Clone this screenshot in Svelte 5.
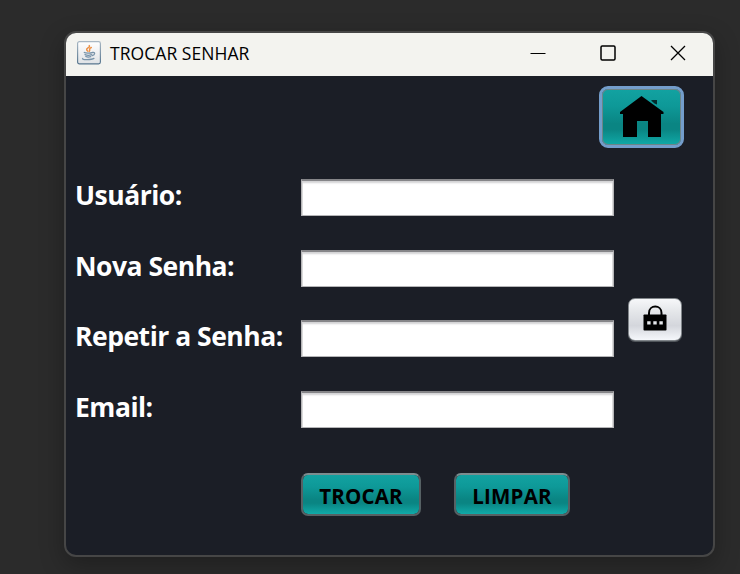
<script>
  const fields = [
    { id: 'usuario', label: 'Usuário:', secret: false },
    { id: 'nova', label: 'Nova Senha:', secret: true },
    { id: 'repetir', label: 'Repetir a Senha:', secret: true },
    { id: 'email', label: 'Email:', secret: false }
  ];
  let values = $state({ usuario: '', nova: '', repetir: '', email: '' });
  let visible = $state(false);

  function clear() {
    for (const f of fields) values[f.id] = '';
  }
</script>

<div class="desktop">
  <main class="window">
    <header class="titlebar">
      <svg class="java" width="24" height="24" viewBox="0 0 24 24">
        <defs>
          <linearGradient id="tile" x1="0" y1="0" x2="0" y2="1">
            <stop offset="0" stop-color="#fff" />
            <stop offset="1" stop-color="#dfe2e5" />
          </linearGradient>
          <linearGradient id="rim" x1="0" y1="0" x2="0" y2="1">
            <stop offset="0" stop-color="#a9b8c4" />
            <stop offset="1" stop-color="#57768f" />
          </linearGradient>
        </defs>
        <rect x=".6" y=".6" width="22.8" height="22.3" rx="1.8" fill="url(#tile)" stroke="url(#rim)" stroke-width="1.2" />
        <g fill="none" stroke-linecap="round">
          <path d="M12.3 4.6c1.300 2-3.700 2.500-2.600 4.300.3.600.9.900 1.100 1.300M14.300 6.500c-3.300 1.200-.6 2.100-2 3.700" stroke="#ed9146" stroke-width="1.5" />
          <path d="M7.300 11.500c1 .9 6.600.8 7.700.1M8 13.600c1.700.8 5 .7 6.500.1M8.800 15.500c1.300.6 3.800.5 5 .1M15.500 11.500c3-.7 2.700 2.500-.2 3M5.800 17.500c-2.200 1.300 8.600 1.600 11.100-.1" stroke="#7893a9" stroke-width="1.300" />
        </g>
      </svg>
      <h1>TROCAR SENHAR</h1>
      <div class="controls">
        <svg width="16" height="16" viewBox="0 0 16 16"><path d="M.5 8.500h15" stroke="#000" /></svg>
        <svg width="16" height="16" viewBox="0 0 16 16"><rect x="1" y="1" width="14" height="14" rx="1.2" fill="none" stroke="#000" stroke-width="1.500" /></svg>
        <svg width="16" height="16" viewBox="0 0 16 16"><path d="M1 1l14 14M15 1L1 15" stroke="#000" stroke-width="1.300" /></svg>
      </div>
    </header>

    <div class="top">
      <button class="home" aria-label="Início">
        <svg width="44" height="42" viewBox="0 0 44 42">
          <path d="M21.500 0L43.500 16V18H41V41H28V25H17V41H3V18H0V16Z" fill="#000" />
          <path d="M31 4.500L32.500 4H37V8.500L34.500 7.500Z" fill="#032c2d" />
        </svg>
      </button>
    </div>

    <div class="form">
      <div class="rows">
        {#each fields as f}
          <div class="row">
            <label for={f.id}>{f.label}</label>
            <input id={f.id} type={f.secret && !visible ? 'password' : 'text'} bind:value={values[f.id]} />
          </div>
        {/each}
      </div>
      <button class="lock" aria-label="Mostrar senha" onclick={() => (visible = !visible)}>
        <svg width="24" height="26" viewBox="0 0 24 26">
          <path d="M6 10V8C6 -.6 18.500 -.6 18.500 8v2" fill="none" stroke="#000" stroke-width="2" />
          <rect x=".5" y="9.500" width="23" height="16" rx=".8" fill="#000" />
          <path d="M4.200 16.300h3.400v3.200H4.200zM10.300 16.300h3.400v3.200h-3.400zM16.400 16.300h3.400v3.200h-3.400z" fill="#e4e6ea" />
        </svg>
      </button>
    </div>

    <div class="actions">
      <button class="trocar">TROCAR</button>
      <button class="limpar" onclick={clear}>LIMPAR</button>
    </div>
  </main>
</div>

<style>
  :global(body) {
    margin: 0;
    overflow: hidden;
  }
  .desktop {
    box-sizing: border-box;
    width: 740px;
    height: 574px;
    padding: 31px 0 0 64px;
    background: #2b2b2b;
    overflow: hidden;
    font-family: 'Open Sans', 'Noto Sans', sans-serif;
  }
  .window {
    box-sizing: border-box;
    width: 651px;
    height: 526px;
    border: 2px solid #464646;
    border-radius: 12px;
    background: #1b1e26;
    overflow: hidden;
    box-shadow: 0 8px 24px rgba(0, 0, 0, 0.28);
  }
  .titlebar {
    display: flex;
    align-items: center;
    box-sizing: border-box;
    height: 43px;
    padding: 0 27px 0 11px;
    background: #f3f3ef;
  }
  .java {
    margin-bottom: 4px;
  }
  h1 {
    margin: 0 0 3px 9px;
    font-size: 17.500px;
    font-weight: 400;
    letter-spacing: 0.05px;
    line-height: 24px;
    color: #000;
    white-space: nowrap;
  }
  .controls {
    display: flex;
    gap: 54px;
    margin-left: auto;
    padding-bottom: 3px;
  }
  button,
  input {
    box-sizing: border-box;
    margin: 0;
    padding: 0;
    font-family: inherit;
  }
  button {
    display: flex;
    align-items: center;
    justify-content: center;
  }
  .top {
    display: flex;
    justify-content: flex-end;
    padding: 10px 29px 0 0;
  }
  .home,
  .trocar,
  .limpar {
    background: linear-gradient(#12a2a1 0%, #0e9998 30%, #0a8583 62%, #0a8583 72%, #10aaa8 100%) padding-box;
  }
  .home {
    width: 85px;
    height: 62px;
    border: 3px solid #739dcb;
    border-radius: 9px;
    box-shadow: inset 0 0 0 1px #6c8588;
  }
  .home svg {
    margin-bottom: 1px;
  }
  .form {
    display: flex;
    align-items: flex-start;
    height: 249px;
    padding: 31px 0 0 9px;
    box-sizing: content-box;
  }
  .rows {
    display: flex;
    flex-direction: column;
    gap: 33.500px;
  }
  .row {
    display: flex;
    height: 37px;
  }
  label {
    width: 226px;
    font-size: 26.500px;
    font-weight: 700;
    letter-spacing: -0.49px;
    line-height: 33px;
    color: #fff;
    white-space: nowrap;
  }
  input {
    width: 313px;
    height: 37px;
    border: 1px solid #b5b5b7;
    border-top: 2px solid #858588;
    border-radius: 0;
    background: #fff;
    box-shadow: inset 0 3px 2px -1px #d2d2d4, inset 1px 0 0 #dcdcdc, inset -1px 0 0 #dcdcdc;
    padding: 0 6px;
    font-size: 20px;
    outline: none;
  }
  .lock {
    width: 54px;
    height: 43px;
    margin: 119px 0 0 14px;
    padding-bottom: 3px;
    border: 1px solid #81868a;
    border-radius: 7px;
    background: linear-gradient(#f6f7f9 0%, #e5e7ea 30%, #d4d6dc 65%, #f5f7fb 100%);
    box-shadow: 0 1px 0 #50555a;
  }
  .actions {
    display: flex;
    gap: 33px;
    padding: 45px 0 0 235px;
  }
  .trocar,
  .limpar {
    height: 43px;
    border: 2px solid #566164;
    border-top-color: #7c8d8f;
    border-radius: 7px;
    font-size: 20.500px;
    font-weight: 700;
    color: #000;
    letter-spacing: 0.2px;
    padding-top: 2px;
  }
  .trocar {
    width: 120px;
  }
  .limpar {
    width: 116px;
  }
</style>
